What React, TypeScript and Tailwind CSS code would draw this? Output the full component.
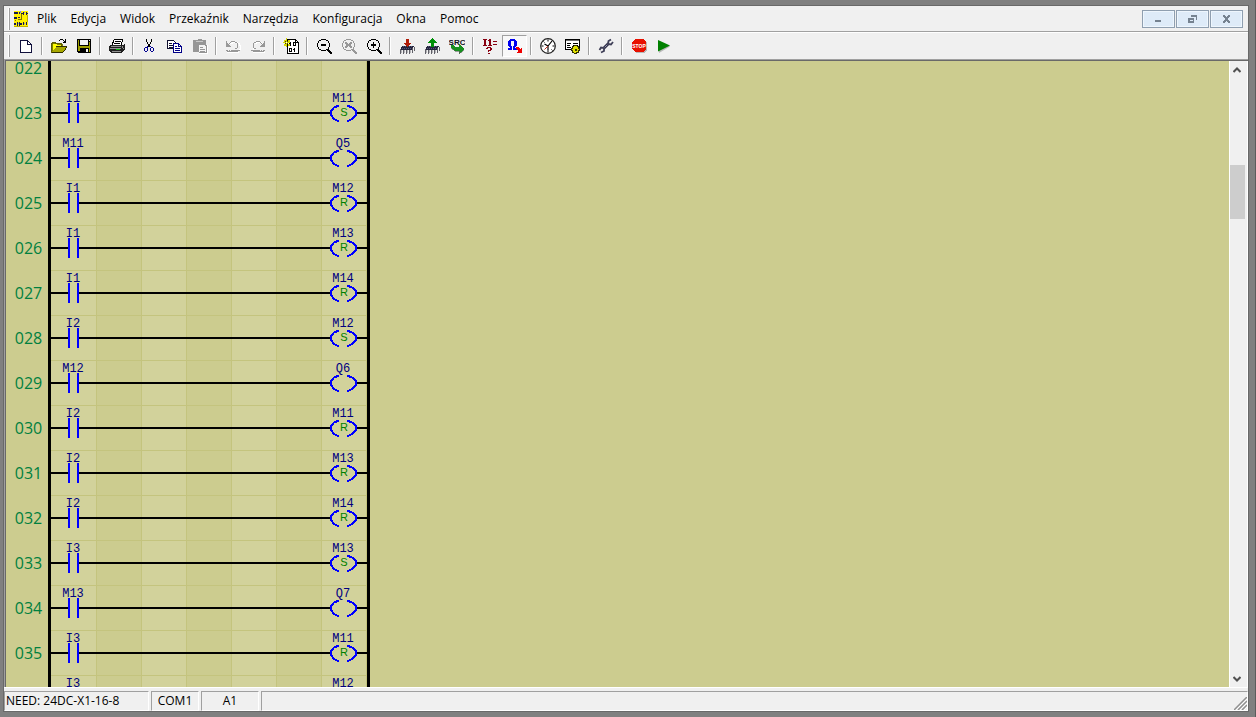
import type { ReactNode } from "react";

type Rung = { id?: string; contact?: string; coil?: string; mode?: "S" | "R" };

const rungs: Rung[] = [
  { id: "022" },
  { id: "023", contact: "I1", coil: "M11", mode: "S" },
  { id: "024", contact: "M11", coil: "Q5" },
  { id: "025", contact: "I1", coil: "M12", mode: "R" },
  { id: "026", contact: "I1", coil: "M13", mode: "R" },
  { id: "027", contact: "I1", coil: "M14", mode: "R" },
  { id: "028", contact: "I2", coil: "M12", mode: "S" },
  { id: "029", contact: "M12", coil: "Q6" },
  { id: "030", contact: "I2", coil: "M11", mode: "R" },
  { id: "031", contact: "I2", coil: "M13", mode: "R" },
  { id: "032", contact: "I2", coil: "M14", mode: "R" },
  { id: "033", contact: "I3", coil: "M13", mode: "S" },
  { id: "034", contact: "M13", coil: "Q7" },
  { id: "035", contact: "I3", coil: "M11", mode: "R" },
  { contact: "I3", coil: "M12" },
];

const menus = ["Plik", "Edycja", "Widok", "Przekaźnik", "Narzędzia", "Konfiguracja", "Okna", "Pomoc"];

function Icon({ children, smooth }: { children: ReactNode; smooth?: boolean }) {
  return (
    <svg
      viewBox="0 0 16 16"
      className="size-4 shrink-0"
      shapeRendering={smooth ? "auto" : "crispEdges"}
      fill="none"
      aria-hidden="true"
    >
      {children}
    </svg>
  );
}

const chip = (
  <>
    <path d="M3 8h12l-2 4H1z" fill="#24243c" />
    <path d="M4 8.5h10M3 10.5h10" stroke="#55557a" strokeWidth="1" strokeDasharray="1 1" />
    <path d="M1.5 11v5M4.5 12v4M7.5 12v4M10.5 12v4M13.5 10v5M15.5 9v4" stroke="#606068" />
    <path d="M2.5 12v3M5.5 12v3M8.5 12v3M11.5 12v3" stroke="#b4b4b8" />
  </>
);

const zoomGlass = (color: string) => (
  <>
    <path
      d="M5 1h5v1H5zM3 2h2v1H3zM10 2h2v1h-2zM2 3h1v2H2zM12 3h1v2h-1zM1 5h1v4H1zM13 5h1v4h-1zM2 9h1v2H2zM12 9h1v2h-1zM3 11h2v1H3zM10 11h2v1h-2zM5 12h5v1H5z"
      fill={color}
    />
    <path d="M12 11h1v1h1v1h1v1h1v2h-2v-1h-1v-1h-1v-1h-1v-1h1z" fill={color} />
  </>
);

type Tool = { label: string; icon: ReactNode; pressed?: boolean };

const groups: Tool[][] = [
  [
    {
      label: "Nowy",
      icon: (
        <Icon>
          <path d="M2.5 2.5h7l4 4v8h-11z" fill="#fff" stroke="#10103c" />
          <path d="M9.5 2.5v4h4" stroke="#10103c" />
        </Icon>
      ),
    },
  ],
  [
    {
      label: "Otwórz",
      icon: (
        <Icon>
          <path d="M1 5h4l1 1h5v4H5l-4 5z" fill="#ffff00" stroke="#808000" strokeWidth="1" />
          <path d="M0.5 14.5V5.5h1v-1h3v1h6v3" stroke="#606000" />
          <path d="M5 9h11l-4 5H1z" fill="#a8a800" />
          <path d="M5 8.5h11M1 14.5h11M12 13.5h1M13 12.5h1M14 11.5h1M14 10.5h1M15 9.5h1" stroke="#303000" />
          <path d="M8 2.5h1M9 1.5h3M12 2.5h1M13 3.5h2M14.5 1v3M12 4.5h3" stroke="#000" />
        </Icon>
      ),
    },
    {
      label: "Zapisz",
      icon: (
        <Icon>
          <path d="M1 1h14v14H2l-1-1z" fill="#000" />
          <path d="M2 2h1v11H2zM13 4h1v10h-1zM3 8h10v1H3z" fill="#a0a000" />
          <path d="M4 2h8v5H4z" fill="#f4f4f4" />
          <path d="M2 9h12v1H2zM2 10h2v3H2z" fill="#a0a000" />
          <path d="M10 11h2v3h-2zM13 2h1v1h-1z" fill="#f4f4f4" />
        </Icon>
      ),
    },
  ],
  [
    {
      label: "Drukuj",
      icon: (
        <Icon>
          <path d="M5 1h9l-2 6H3z" fill="#fff" />
          <path d="M5 1.5h9M4.5 2v3M3.5 4v3M13.5 2v2M12.5 4v3M6 3.5h6M5 5.5h6" stroke="#000" />
          <path d="M2 7h12l2-1v5l-3 4H2l-2-2V8z" fill="#202020" />
          <path d="M2 8h10v1H2zM1 10h11v1H1zM3 13h9v1H3z" fill="#909090" />
          <path d="M13 8h1v2h-1zM14 10h1v1h-1z" fill="#909090" />
          <path d="M7 11h4v1H7z" fill="#00c000" />
        </Icon>
      ),
    },
  ],
  [
    {
      label: "Wytnij",
      icon: (
        <Icon>
          <path d="M4 1h1v3H4zM5 4h1v2H5zM9 1h1v3H9zM8 4h1v2H8zM6 6h2v3H6z" fill="#000" />
          <path
            d="M5 8h1v2H5zM8 8h1v1H8zM3 9h2v1H3zM2 10h1v3H2zM3 13h2v1H3zM5 10h1v3H5zM9 9h2v1H9zM8 10h1v3H8zM11 10h1v3h-1zM9 13h2v1H9z"
            fill="#000090"
          />
        </Icon>
      ),
    },
    {
      label: "Kopiuj",
      icon: (
        <Icon>
          <path d="M0.5 2.5h6l2 2v6h-8z" fill="#fff" stroke="#101030" />
          <path d="M2 5.5h3M2 7.5h4M2 9.5h4" stroke="#101030" />
          <path d="M6.5 5.5h5l3 3v6h-8z" fill="#fff" stroke="#000088" />
          <path d="M11.5 5.5v3h3M8 8.5h2M8 10.5h5M8 12.5h5" stroke="#000088" />
        </Icon>
      ),
    },
    {
      label: "Wklej",
      icon: (
        <Icon>
          <path d="M1 2h4l1-1h3l1 1h4v5h1v8H7v-1H1z" fill="#969696" />
          <path d="M4 3.5h7" stroke="#c8c8c8" />
          <path d="M7 7h5l2 2v5H7z" fill="#f4f4f4" />
          <path d="M8 9.5h3M8 11.5h5M8 13.5h5" stroke="#969696" />
          <path d="M15.5 7v9M7 15.5h8" stroke="#fff" />
        </Icon>
      ),
    },
  ],
  [
    {
      label: "Cofnij",
      icon: (
        <Icon>
          <path d="M4 5v-1h2v-1h5v1h2v2h1v4h-1v1h-2v1" stroke="#fff" transform="translate(1 1)" />
          <path d="M4 5.5h1M5 4.5h1M6 3.5h4M10 4.5h2M12.5 5v5M10 10.5h2M1.5 3v6M1 8.5h5M2 7.5h3M2 6.5h2M2 5.5h1" stroke="#989898" />
          <path d="M1 12.5h2M4 12.5h1M6 12.5h9M2 13.5h11" stroke="#989898" />
          <path d="M2 14.5h12" stroke="#fff" />
        </Icon>
      ),
    },
    {
      label: "Ponów",
      icon: (
        <Icon>
          <path d="M4 4h1v-1h5v1h2M2 6v5h2" stroke="#fff" transform="translate(1 1)" />
          <path d="M11 5.5h1M10 4.5h1M6 3.5h4M4 4.5h2M3.5 5v5M4 10.5h2M14.5 3v6M10 8.5h5M11 7.5h3M12 6.5h2M13 5.5h1" stroke="#989898" />
          <path d="M1 12.5h9M11 12.5h1M13 12.5h2M3 13.5h11" stroke="#989898" />
          <path d="M3 14.5h12" stroke="#fff" />
        </Icon>
      ),
    },
  ],
  [
    {
      label: "Nowy program",
      icon: (
        <Icon>
          <path d="M4.5 1.5h8l3 3v11h-11z" fill="#fff" stroke="#000" />
          <path d="M12.5 1.5v3h3" stroke="#000" />
          <path d="M7 4h1v4H7zM6 5h1v1H6zM10 4h3v4h-3zM6 10h3v4H6zM11 10h1v4h-1zM10 11h1v1h-1z" fill="#000" />
          <path d="M11 5h1v2h-1zM7 11h1v2H7z" fill="#fff" />
          <path d="M3.5 0v9M0 4.5h7M1 2h1v1H1zM5 2h1v1H5zM1 6h1v1H1zM5 6h1v1H5z" stroke="#d8d800" />
          <path d="M2 3h1v1H2zM4 3h1v1H4zM2 5h1v1H2zM4 5h1v1H4z" fill="#404000" />
          <path d="M3 4h1v1H3z" fill="#fff" />
        </Icon>
      ),
    },
  ],
  [
    { label: "Pomniejsz", icon: <Icon>{zoomGlass("#000")}<path d="M5 6h5v2H5z" fill="#000" /></Icon> },
    {
      label: "Skala 1:1",
      icon: (
        <Icon>
          {zoomGlass("#989898")}
          <path d="M4 4h2v1h1v1h1V5h1V4h2v2h-1v2h1v2H9V9H8V8H7v1H6v1H4V8h1V6H4z" fill="#989898" />
        </Icon>
      ),
    },
    { label: "Powiększ", icon: <Icon>{zoomGlass("#000")}<path d="M5 6h5v2H5zM7 4h1v6H7z" fill="#000" /></Icon> },
  ],
  [
    { label: "Zapisz do przekaźnika", icon: <Icon>{chip}<path d="M7 1h3v4h3L8.500 9 4 5h3z" fill="#b01c08" /></Icon> },
    { label: "Odczytaj z przekaźnika", icon: <Icon>{chip}<path d="M8.500 0L13 5h-3v4H7V5H4z" fill="#009008" /></Icon> },
    {
      label: "Źródło",
      icon: (
        <Icon>
          <text x="8" y="7" textAnchor="middle" fontSize="8" fontWeight="700" fontFamily="Liberation Sans, sans-serif" fill="#101020">SRC</text>
          <path d="M2 7h2l2 2h4V6l6 5-6 5v-3H6l-4-3z" fill="#189020" />
          <path d="M2 10l4 3h4v3M10 16l5-4" stroke="#606060" strokeWidth="0.6" />
        </Icon>
      ),
    },
  ],
  [
    {
      label: "Stan wejść",
      icon: (
        <Icon>
          <path d="M1 1h4v1H4v5h1v1H1V7h1V2H1z" fill="#880010" />
          <path d="M7 1h2v6h1v1H6V7h1V3H6V2h1zM11 3h4v1h-4zM11 6h4v1h-4z" fill="#880010" />
          <path d="M4 10h1V9h4v1h1v2H9v1H7v1H6v-2h2v-2H6v1H4zM6 15h2v1H6z" fill="#880010" />
        </Icon>
      ),
    },
    {
      label: "Symulacja",
      pressed: true,
      icon: (
        <Icon>
          <path d="M3 1h5v1h1v1h1v5H9v1H8v1h2v2H6V8h1V3H4v5h1v4H1v-2h2V9H2V8H1V3h1V2h1z" fill="#0000f0" />
          <path d="M9 9h2l1 1 1 1 2-1v5h-5l1-2-2-2z" fill="#f00000" />
        </Icon>
      ),
    },
  ],
  [
    {
      label: "Zegar",
      icon: (
        <Icon smooth>
          <circle cx="8" cy="8" r="7.300" fill="#fff" stroke="#202020" strokeWidth="1.200" />
          <path d="M8 1.500v2M8 12.500v2M1.500 8h2M12.500 8h2M3.500 3.500l1 1M11.500 11.500l1 1" stroke="#000" />
          <path d="M8 8l4-5M8 8v4.500M8 8L4.500 6" stroke="#000" strokeWidth="1.200" />
          <path d="M8 8L4.500 11.500" stroke="#c03020" />
        </Icon>
      ),
    },
    {
      label: "Ustawienia",
      icon: (
        <Icon>
          <path d="M0.500 1.500h14v10H.5z" fill="#fff" stroke="#000" />
          <path d="M1 2.500h13" stroke="#707070" />
          <path d="M2 5.500h4M8 5.500h5M2 7.500h3M2 9.500h4M8 7.500h5" stroke="#000" />
          <path d="M9 7h3v1h2v2h1v3h-1v2h-2v1H9v-1H7v-2H6v-3h1V8h2z" fill="#303000" />
          <path d="M9 8h3v1h1v2h1v1h-1v2h-2v1H9v-1H8v-2H7v-1h1V9h1z" fill="#e0e000" />
          <path d="M10 11h2v2h-2z" fill="#404000" />
        </Icon>
      ),
    },
  ],
  [
    {
      label: "Klucz",
      icon: (
        <Icon smooth>
          <path d="M5.500 10.500L10.500 5.500" stroke="#303048" strokeWidth="3" />
          <path d="M5.500 10.500L10.500 5.500" stroke="#9090b0" strokeWidth="1" />
          <path d="M13 1.500L10.500 3 10 6l3 .5L15 4" stroke="#404058" strokeWidth="1.800" />
          <path d="M3 14.500L6 13V10L3 9.500 1.500 12" stroke="#404058" strokeWidth="1.800" />
        </Icon>
      ),
    },
  ],
  [
    {
      label: "Stop",
      icon: (
        <Icon>
          <path d="M6 2h7l3 3v7l-3 3H6l-4-3V5z" fill="#b8b8b8" />
          <path d="M5 1h7l3 3v7l-3 3H5l-4-3V4z" fill="#e81000" />
          <text x="8" y="10" textAnchor="middle" fontSize="5" fontWeight="700" fontFamily="Liberation Sans, sans-serif" fill="#fff">STOP</text>
        </Icon>
      ),
    },
    {
      label: "Start",
      icon: (
        <Icon smooth>
          <path d="M3 3l11 5.500L3 15z" fill="#b8b8b8" />
          <path d="M2 2l12 5.500L2 13.500z" fill="#008000" />
        </Icon>
      ),
    },
  ],
];

function ToolButton({ label, icon, pressed }: Tool) {
  return (
    <button
      type="button"
      aria-label={label}
      aria-pressed={pressed}
      className={
        pressed
          ? "flex h-[22px] w-[25px] items-center justify-center border border-t-[#a0a0a0] border-r-white border-b-white border-l-[#a0a0a0] bg-[#f8f8f8]"
          : "flex h-[22px] w-[25px] items-center justify-center"
      }
    >
      {icon}
    </button>
  );
}

function RungDrawing({ rung }: { rung: Rung }) {
  const tag = { fontSize: 12, fontFamily: "Liberation Mono, monospace", textAnchor: "middle" as const, fill: "#000080" };
  return (
    <svg viewBox="0 0 316 45" className="h-[45px] w-[316px] shrink-0" shapeRendering="crispEdges">
      {[0, 90, 180, 270].map((x) => (
        <rect key={x} x={x} width="45" height="45" fill="#d2d29b" />
      ))}
      {[45, 90, 135, 180, 225, 270, 315].map((x) => (
        <rect key={x} x={x} width="1" height="45" fill="#c4c47e" />
      ))}
      <rect y="44" width="316" height="1" fill="#c4c47e" />
      {rung.contact && (
        <>
          <path d="M0 21h17v2H0zM28 21h251v2H28zM305 21h11v2h-11z" fill="#000" />
          <path d="M17 12h2v20h-2zM26 12h2v20h-2z" fill="#0000ff" />
          <path
            d="M288 14.500L283 16.500 280 20V24L283 28 288 30.500M296 14.500L301 16.500 305 20V24L301 28 296 30.500"
            fill="none"
            stroke="#0000ff"
            strokeWidth="2"
          />
          <text x="22" y="11" {...tag}>{rung.contact}</text>
          <text x="292" y="11" {...tag}>{rung.coil}</text>
          {rung.mode && (
            <text x="293" y="25" fontSize="11" fontFamily="Liberation Sans, sans-serif" textAnchor="middle" fill="#008000">
              {rung.mode}
            </text>
          )}
        </>
      )}
    </svg>
  );
}

const captionClass =
  "flex h-[18px] w-[33px] items-center justify-center border border-[#8f9fb0] bg-[#deebf8] outline-1 -outline-offset-2 outline-[#eef6fd]";

function CaptionButton({ label, children }: { label: string; children: ReactNode }) {
  return (
    <button type="button" aria-label={label} className={captionClass}>
      <svg viewBox="0 0 9 8" className="h-2 w-[9px]" shapeRendering="crispEdges" fill="#758290">
        {children}
      </svg>
    </button>
  );
}

export default function App() {
  return (
    <div className="h-screen border-r border-[#5c5c5c] bg-[#808080] pt-[5px] pr-[6px] pb-[5px] pl-[3px] font-['Open_Sans',sans-serif] text-xs text-black">
      <div className="flex h-full flex-col border border-[#696969] bg-[#f0f0f0]">
        <header className="flex h-[26px] shrink-0 items-center border-b border-[#a0a0a0] pr-[5px] pl-1">
          <span className="h-[22px] w-[2px] border-r border-[#a0a0a0] bg-white" />
          <svg viewBox="0 0 14 16" className="ml-1 h-4 w-[14px]" shapeRendering="crispEdges" aria-hidden="true">
            <rect width="14" height="16" fill="#fff000" />
            <path d="M0 1h4v2H0zM5 1h1v2H5zM7 2h2v1H7zM9 1h1v3H9zM12 1h1v3h-1zM13 2h1v1h-1zM0 6h3v2H0zM4 6h2v1H4zM0 12h2v2H0zM3 11h1v4H3zM5 11h1v4H5zM6 12h2v2H6zM9 11h1v3H9zM12 11h1v3h-1z" fill="#18184c" />
            <path d="M7 3h1v5H7zM4 8h4v1H4zM1 9h1v1H1z" fill="#807000" />
            <path d="M6 0h1v2H6zM10 1h1v1h-1zM4 12h1v1H4zM10 12h1v1h-1z" fill="#8088e0" />
            <path d="M13 4h1v7h-1zM0 15h14v1H0z" fill="#c0b000" />
          </svg>
          <nav className="ml-[2px] flex" aria-label="Menu">
            {menus.map((m) => (
              <button key={m} type="button" className="px-[7px] leading-5 whitespace-nowrap">
                {m}
              </button>
            ))}
          </nav>
          <div className="ml-auto flex gap-px">
            <CaptionButton label="Minimalizuj"><path d="M1 5h6v2H1z" /></CaptionButton>
            <CaptionButton label="Przywróć"><path d="M3 0h6v5H8V2H3zM0 3h6v5H0zM2 5v1h3V5z" fillRule="evenodd" /></CaptionButton>
            <CaptionButton label="Zamknij"><path d="M1 0h2v1h1v1h1V1h1V0h2v2H7v1H6v2h1v1h1v2H6V7H5V6H4v1H3v1H1V6h1V5h1V3H2V2H1z" /></CaptionButton>
          </div>
        </header>

        <div className="flex h-[27px] shrink-0 items-center border-t border-white pl-1" role="toolbar" aria-label="Narzędzia">
          <span className="h-[22px] w-[2px] border-r border-[#a0a0a0] bg-white" />
          <div className="ml-[3px] flex">
            {groups.map((g, i) => (
              <div key={i} className="flex items-center">
                {i > 0 && (
                  <span className="flex w-2 justify-center">
                    <span className="h-[18px] w-[2px] border-l border-[#a0a0a0] bg-white" />
                  </span>
                )}
                {g.map((t) => (
                  <ToolButton key={t.label} {...t} />
                ))}
              </div>
            ))}
          </div>
        </div>

        <main className="flex min-h-0 flex-1 border-t border-l border-[#a0a0a0]">
          <div className="flex min-w-0 flex-1 border-t border-l border-[#696969]">
            <div className="min-w-0 flex-1 overflow-hidden bg-[#cccc8f]">
              <div className="-mt-[15px]">
                {rungs.map((r, i) => (
                  <div key={i} className="flex h-[45px] items-stretch">
                    <span className="flex w-[42px] items-center justify-center pb-[2px] pl-[3px] text-base text-[#008040]">{r.id}</span>
                    <span className="w-[3px] bg-black" />
                    <RungDrawing rung={r} />
                    <span className="w-[3px] bg-black" />
                  </div>
                ))}
              </div>
            </div>
            <div className="flex w-[19px] flex-col items-center border-r border-l border-white bg-[#f0f0f0]">
              <button type="button" aria-label="Przewiń w górę" className="flex h-[17px] w-full items-center justify-center pr-[3px]">
                <svg viewBox="0 0 8 6" className="h-[6px] w-2" fill="none" stroke="#505050" strokeWidth="2">
                  <path d="M.5 5L4 1.500 7.500 5" />
                </svg>
              </button>
              <div className="w-full flex-1 pt-[87px] pr-[2px]">
                <div className="h-[54px] bg-[#cdcdcd]" />
              </div>
              <button type="button" aria-label="Przewiń w dół" className="flex h-[17px] w-full items-center justify-center pr-[3px]">
                <svg viewBox="0 0 8 6" className="h-[6px] w-2" fill="none" stroke="#505050" strokeWidth="2">
                  <path d="M.5 1L4 4.500 7.500 1" />
                </svg>
              </button>
            </div>
          </div>
        </main>

        <footer className="flex h-6 shrink-0 items-end gap-[2px] border-t border-white leading-[18px]">
          <span className="h-5 w-[145px] border border-t-[#a0a0a0] border-r-white border-b-white border-l-[#a0a0a0] pl-px">NEED: 24DC-X1-16-8</span>
          <span className="h-5 w-12 border border-t-[#a0a0a0] border-r-white border-b-white border-l-[#a0a0a0] text-center">COM1</span>
          <span className="h-5 w-[58px] border border-t-[#a0a0a0] border-r-white border-b-white border-l-[#a0a0a0] text-center">A1</span>
          <span className="flex h-5 flex-1 items-end justify-end border border-t-[#a0a0a0] border-r-white border-b-white border-l-[#a0a0a0]">
            <svg viewBox="0 0 13 13" className="size-[13px]" aria-hidden="true">
              <path d="M0 13L13 0M4 13l9-9M8 13l5-5" stroke="#909090" strokeWidth="1.500" />
              <path d="M2 13L13 2M6 13l7-7M10 13l3-3" stroke="#fff" />
            </svg>
          </span>
        </footer>
      </div>
    </div>
  );
}
